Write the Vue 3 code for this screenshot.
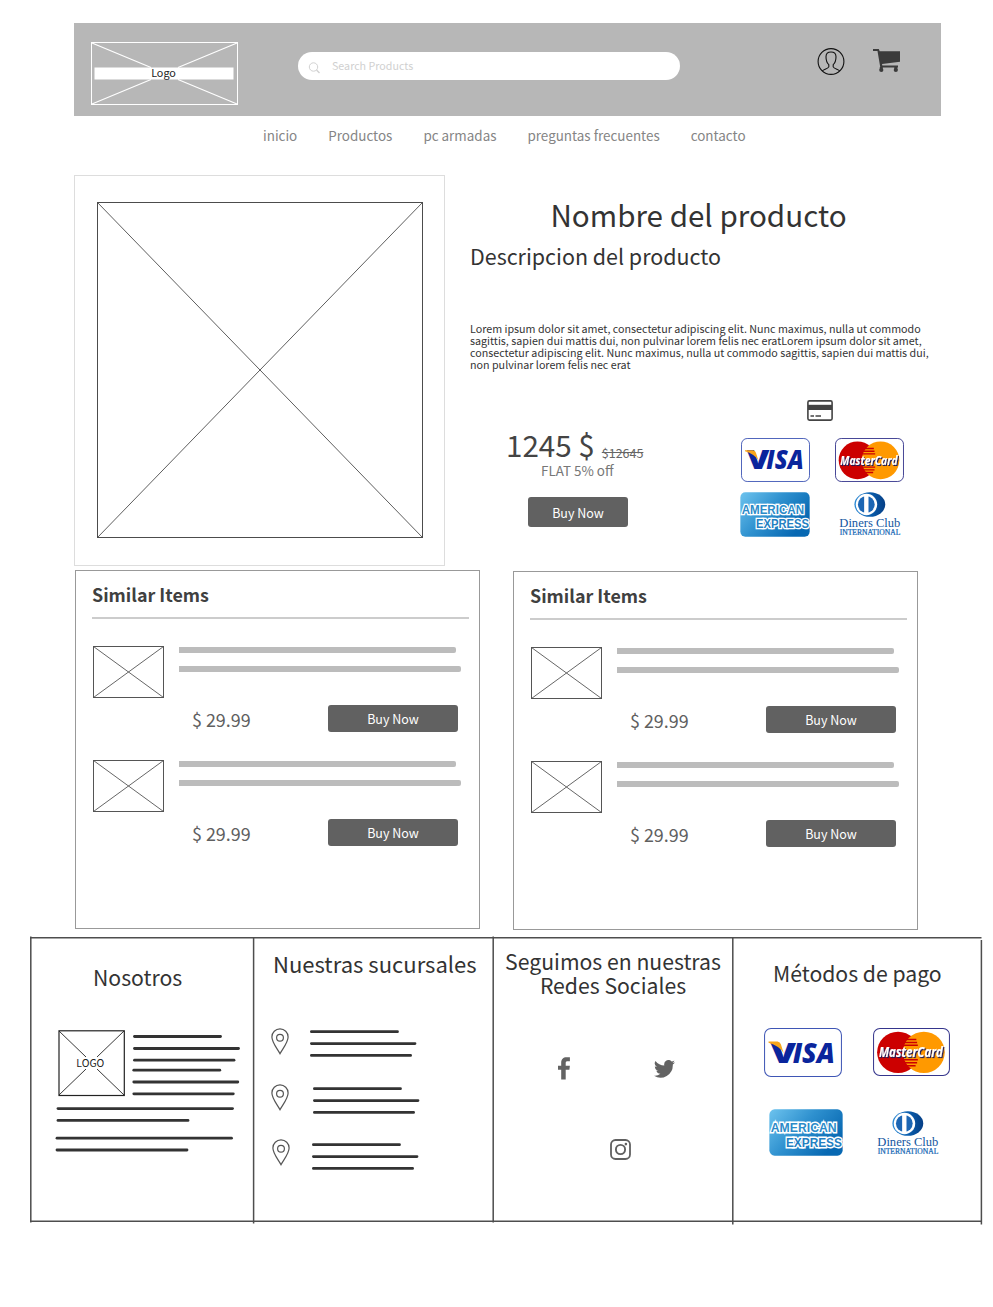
<script setup>
const nav = ['inicio', 'Productos', 'pc armadas', 'preguntas frecuentes', 'contacto']
const cards = [0, 1]
const items = [0, 1]
const sideLines = [
  [133.5, 1036.5, 88], [133.5, 1048.5, 106], [133.5, 1060.2, 101.5],
  [132.8, 1070.2, 88], [132.8, 1082, 106], [132.8, 1093.8, 101.5],
  [57, 1108.6, 176.5], [57, 1120.4, 132], [56, 1138.2, 176.5], [56, 1150, 132],
]
const branches = [
  { id: 'a', pin: 'pin-a', lines: 'lines-a' },
  { id: 'b', pin: 'pin-b', lines: 'lines-b' },
  { id: 'c', pin: 'pin-c', lines: 'lines-c' },
]
const brands = [
  {
    id: 'visa',
    box: '0 0 207 130',
    art: `<rect x="1.5" y="1.5" width="204" height="127" rx="17" fill="#fff" stroke="#3f56b5" stroke-width="2.7"/>
      <text y="92" font-family="Open Sans, sans-serif" font-weight="800" font-size="76" fill="#0a259c"><tspan x="17" textLength="68" lengthAdjust="spacingAndGlyphs">V</tspan><tspan x="76" font-style="italic" textLength="112" lengthAdjust="spacingAndGlyphs">ISA</tspan></text>
      <path d="M12 36H36Q43 37 45 44L52 66Q40 47 12 39Z" fill="#f7a51c"/>`,
  },
  {
    id: 'mc',
    box: '0 0 206 130',
    art: `<rect x="1.5" y="1.5" width="203" height="127" rx="17" fill="#fff" stroke="#35358c" stroke-width="2.7"/>
      <circle cx="67" cy="66" r="56" fill="#cc0000"/>
      <circle cx="136" cy="66" r="56" fill="#ff9900"/>
      <path d="M88 31H116M84 39H118M82 47H120M82 86H120M84 94H118M88 102H114" stroke="#cc0000" stroke-width="4"/>
      <g font-family="Open Sans, sans-serif" font-weight="700" font-style="italic" font-size="39">
        <text x="16" y="79" textLength="171" lengthAdjust="spacingAndGlyphs" fill="#fff" stroke="#fff" stroke-width="0.6" class="mc-word">MasterCard</text>
      </g>`,
  },
  {
    id: 'amex',
    box: '0 0 210 132',
    art: `<rect x="1" y="1" width="208" height="130" rx="15" fill="url(#amexFill)"/>
      <g font-family="Liberation Sans, sans-serif" font-weight="700" font-size="36" stroke="#fff" stroke-width="8" paint-order="stroke" stroke-linejoin="miter">
        <text x="5" y="64" textLength="187" lengthAdjust="spacingAndGlyphs" fill="#2b8bc9">AMERICAN</text>
        <text x="48" y="106" textLength="159" lengthAdjust="spacingAndGlyphs" fill="#2380c2">EXPRESS</text>
      </g>`,
  },
  {
    id: 'diners',
    box: '0 0 185 132',
    art: `<ellipse cx="92" cy="37.5" rx="46" ry="37" fill="url(#dinersFill)"/>
      <circle cx="82" cy="37.5" r="32" fill="#fff"/>
      <circle cx="81.500" cy="37.500" r="25" fill="#1c66b4"/>
      <rect x="75" y="10" width="13" height="55" fill="#fff"/>
      <g font-family="Liberation Serif, serif" fill="#14579f">
        <text x="1" y="104" font-size="38" textLength="182" lengthAdjust="spacingAndGlyphs">Diners Club</text>
        <text x="2" y="128" font-size="22" textLength="181" lengthAdjust="spacingAndGlyphs" fill="#1769b5" stroke="#1769b5" stroke-width="0.7">INTERNATIONAL</text>
      </g>`,
  },
]
</script>

<template>
  <div class="page">
    <svg class="defs" aria-hidden="true">
      <defs>
        <linearGradient id="amexFill" x1="0" y1="0" x2="1" y2="0.55">
          <stop offset="0" stop-color="#6dc3ee" />
          <stop offset="0.5" stop-color="#2f91cf" />
          <stop offset="1" stop-color="#0768b2" />
        </linearGradient>
        <linearGradient id="dinersFill" x1="0" y1="0" x2="1" y2="0">
          <stop offset="0" stop-color="#2b8ad6" />
          <stop offset="0.55" stop-color="#0a5cab" />
          <stop offset="1" stop-color="#063f86" />
        </linearGradient>
      </defs>
    </svg>

    <header class="header">
      <div class="logo">
        <svg class="logo-box" viewBox="0 0 147 63">
          <rect x="0.5" y="0.5" width="146" height="62" fill="none" stroke="#fff" />
          <path d="M1 1L60 25.500M146 1L87 25.500M1 62L60 37.500M146 62L87 37.500" stroke="#fff" stroke-width="1.200" />
          <rect x="3.500" y="25.500" width="139" height="12" fill="#fff" />
        </svg>
        <span class="logo-text">Logo</span>
      </div>
      <div class="search">
        <svg width="12" height="12" viewBox="0 0 12 12" fill="none" stroke="#d2d2d2">
          <circle cx="5.500" cy="5" r="4.200" />
          <path d="M8.500 8L11.500 11" stroke-width="1.400" />
        </svg>
        <span>Search Products</span>
      </div>
      <svg class="user" width="28" height="28" viewBox="0 0 28 28" fill="none" stroke="#111" stroke-width="1.100">
        <circle cx="14" cy="14.500" r="12.900" />
        <path d="M5.300 23.900C7 22.400 11 21.800 11.800 19.900V17.700C9.800 15.800 9 13.200 9 9.700C9 6.800 10.900 5 14 5S19 6.800 19 9.700C19 13.200 18.200 15.800 16.200 17.700V19.900C17 21.800 21 22.400 22.700 23.900" />
      </svg>
      <svg class="cart" width="28" height="24" viewBox="0 0 28 24" fill="#3b3b3b">
        <path d="M0 0H5.800L6.700 2.200H27V12.700L9 15L9.300 16.600H25V18.600H7.300L4.500 2H0Z" />
        <circle cx="8.300" cy="21" r="2.100" />
        <circle cx="22.800" cy="21" r="2.100" />
        <path d="M6.800 18H9.800V21H6.800ZM21.300 18H24.300V21H21.300Z" />
      </svg>
    </header>

    <nav class="nav">
      <a v-for="label in nav" :key="label">{{ label }}</a>
    </nav>

    <main class="product">
      <div class="gallery">
        <svg width="326" height="336" viewBox="0 0 326 336" fill="none" stroke="#4c4c4c">
          <rect x="0.5" y="0.5" width="325" height="335" />
          <path d="M0.5 0.5L325.500 335.500M325.500 0.5L0.5 335.500" stroke-width="0.9" />
        </svg>
      </div>
      <div class="info">
        <h1>Nombre del producto</h1>
        <h2>Descripcion del producto</h2>
        <p class="description">
          Lorem ipsum dolor sit amet, consectetur adipiscing elit. Nunc maximus, nulla ut commodo<br>
          sagittis, sapien dui mattis dui, non pulvinar lorem felis nec eratLorem ipsum dolor sit amet,<br>
          consectetur adipiscing elit. Nunc maximus, nulla ut commodo sagittis, sapien dui mattis dui,<br>
          non pulvinar lorem felis nec erat
        </p>
        <div class="purchase">
          <div class="offer">
            <div class="price-row"><span class="price">1245 $</span><s>$12645</s></div>
            <div class="discount">FLAT 5% off</div>
            <button class="buy buy-main">Buy Now</button>
          </div>
          <div class="payments">
            <svg class="card-icon" width="26" height="21" viewBox="0 0 26 21">
              <rect x="0.9" y="0.9" width="24.200" height="19.200" rx="1.500" fill="#fff" stroke="#444" stroke-width="1.600" />
              <path d="M1 4.800H25V10H1Z" fill="#444" />
              <path d="M3.500 16H7M8.500 16H14" stroke="#444" stroke-width="1.400" />
            </svg>
            <div class="brands">
              <svg v-for="b in brands" :key="b.id" :class="['brand', 'b-' + b.id]" :viewBox="b.box" preserveAspectRatio="none" v-html="b.art"></svg>
            </div>
          </div>
        </div>
      </div>
    </main>

    <section class="similar">
      <article v-for="card in cards" :key="card" class="similar-card">
        <h3>Similar Items</h3>
        <div v-for="item in items" :key="item" class="item">
          <svg class="thumb" width="71" height="52" viewBox="0 0 71 52" fill="none" stroke="#555">
            <rect x="0.5" y="0.5" width="70" height="51" />
            <path d="M0.5 0.5L70.500 51.500M70.500 0.5L0.5 51.500" stroke-width="0.9" />
          </svg>
          <div class="item-body">
            <div class="bar"></div>
            <div class="bar bar-long"></div>
            <div class="item-row">
              <span class="item-price">$ 29.99</span>
              <button class="buy">Buy Now</button>
            </div>
          </div>
        </div>
      </article>
    </section>

    <footer class="footer">
      <svg class="frame" width="955" height="290" viewBox="29 936 955 290" fill="none" stroke="#222" stroke-width="1.500" stroke-opacity="0.8">
        <path d="M30 937.700H981.500M30 1221.200H982M30.800 936.500V1222.500M253.600 938V1223.500M493.200 936.500V1222.500M732.800 938V1224.500M981.400 940V1224.500" />
      </svg>
      <section class="col about">
        <h4>Nosotros</h4>
        <svg class="about-art" width="190" height="126" viewBox="54 1028 190 126">
          <g fill="none" stroke="#222">
            <rect x="59" y="1030.800" width="65.300" height="64.700" stroke-width="1.200" />
            <path d="M59 1031L86 1057M124 1031L97 1057M59 1095L86 1069M124 1095L97 1069" stroke-width="0.9" />
          </g>
          <text x="76.300" y="1066.800" class="mini-logo" textLength="28" lengthAdjust="spacingAndGlyphs">LOGO</text>
          <path v-for="(l, i) in sideLines" :key="i" :d="`M${l[0] + 1} ${l[1]}h${l[2] - 2}`" stroke="#333" stroke-width="2.800" stroke-linecap="round" />
        </svg>
      </section>
      <section class="col places">
        <h4>Nuestras sucursales</h4>
        <div v-for="b in branches" :key="b.id" class="branch">
          <svg :class="b.pin" width="18" height="27" viewBox="0 0 18 27" fill="none" stroke="#555" stroke-width="1.200">
            <path d="M9 25.700C6.500 21 0.9 14.500 0.9 9A8.100 8.100 0 0 1 17.100 9C17.100 14.500 11.500 21 9 25.700Z" />
            <circle cx="9" cy="9.800" r="3.400" />
          </svg>
          <svg :class="b.lines" width="108" height="28" viewBox="0 0 108 28" stroke="#333" stroke-width="2.800" stroke-linecap="round">
            <path d="M1.400 1.700H87.500M1.400 13.600H105M1.400 25.400H100.600" />
          </svg>
        </div>
      </section>
      <section class="col social">
        <h4>Seguimos en nuestras<br>Redes Sociales</h4>
        <div class="social-row">
          <svg width="12" height="23" viewBox="0 0 12 23" fill="#636363">
            <path d="M3.200 22.500V12.700H0V8.700H3.200V6C3.200 2.200 5.200 0.300 8.600 0.300H11.900V4.200H9.700C8.200 4.200 7.700 4.800 7.700 6.100V8.700H11.900L11.400 12.700H7.700V22.500Z" />
          </svg>
          <svg width="21" height="18" viewBox="0 0 24 20" preserveAspectRatio="none" fill="#636363">
            <path d="M24 2.400a9.800 9.800 0 0 1-2.800.8A4.900 4.900 0 0 0 23.300.5a9.900 9.900 0 0 1-3.100 1.200 4.900 4.900 0 0 0-8.400 4.500A14 14 0 0 1 1.700 1a4.900 4.900 0 0 0 1.500 6.600A4.900 4.900 0 0 1 1 7a4.900 4.900 0 0 0 3.900 4.900 4.900 4.900 0 0 1-2.200.1 4.900 4.900 0 0 0 4.600 3.400A9.900 9.900 0 0 1 0 17.500 14 14 0 0 0 21.500 5.100 10 10 0 0 0 24 2.400Z" />
          </svg>
        </div>
        <svg class="instagram" width="21" height="21" viewBox="0 0 21 21" fill="none" stroke="#606060">
          <rect x="1" y="1" width="19" height="19" rx="4.500" stroke-width="1.800" />
          <circle cx="10.500" cy="10.500" r="4.600" stroke-width="1.900" />
          <circle cx="15.900" cy="5.100" r="1.300" fill="#606060" stroke="none" />
        </svg>
      </section>
      <section class="col methods">
        <h4>Métodos de pago</h4>
        <div class="brands brands-footer">
          <svg v-for="b in brands" :key="b.id" :class="['brand', 'b-' + b.id]" :viewBox="b.box" preserveAspectRatio="none" v-html="b.art"></svg>
        </div>
      </section>
    </footer>
  </div>
</template>

<style>
html, body { background: #fff; }
</style>

<style scoped>
* { box-sizing: border-box; }
.page {
  width: 993px;
  height: 1307px;
  padding-top: 23px;
  overflow: hidden;
  background: #fff;
  color: #333;
  font-family: "Noto Sans CJK SC", "Noto Sans", sans-serif;
}
svg { display: block; flex: none; }
.defs { position: absolute; width: 0; height: 0; }
h1, h2, h3, h4, p { margin: 0; font-weight: 400; white-space: nowrap; }

.header {
  display: flex;
  align-items: flex-start;
  width: 867px;
  height: 93px;
  margin-left: 74px;
  background: #b7b7b7;
}
.logo { position: relative; width: 147px; height: 63px; margin: 19px 0 0 17px; }
.logo-box { width: 147px; height: 63px; }
.logo-text {
  position: absolute;
  inset: 22px 0 auto;
  padding-right: 2px;
  text-align: center;
  font-size: 10.8px;
  line-height: 16px;
  color: #222;
}
.search {
  display: flex;
  align-items: center;
  gap: 12px;
  width: 382px;
  height: 28px;
  margin: 29px 0 0 60px;
  padding-left: 10px;
  border-radius: 14px;
  background: #fff;
  color: #d0d0d0;
  font-size: 10.7px;
  line-height: 16px;
}
.search svg { margin-top: 3px; }
.user { margin: 24px 0 0 137px; }
.cart { margin: 26px 0 0 28px; }

.nav {
  display: flex;
  gap: 31px;
  height: 59px;
  padding: 1px 0 0 263px;
  color: #858585;
  font-size: 13.43px;
  line-height: 36px;
}

.product { display: flex; height: 391px; margin-left: 74px; }
.gallery { width: 371px; height: 391px; padding: 26px 0 0 22px; border: 1px solid #ddd; }
.info { width: 460px; margin-left: 25px; padding-top: 22px; }
h1 { padding-right: 3px; font-size: 29.6px; line-height: 36px; text-align: center; }
h2 { margin-top: 8px; font-size: 21.45px; line-height: 30px; }
.description { margin-top: 52px; font-size: 10.73px; line-height: 12px; }
.purchase { display: flex; margin-top: 29px; }
.offer { width: 270px; padding-top: 26px; }
.price-row { display: flex; align-items: baseline; gap: 7px; height: 34px; padding-left: 36px; }
.price { font-size: 29.6px; line-height: 38px; color: #444; }
s { position: relative; top: 1px; font-size: 12.5px; color: #666; }
.discount { margin: 0 0 0 71px; font-size: 13.4px; line-height: 20px; color: #777; }
.buy {
  display: block;
  width: 130px;
  height: 27px;
  padding: 0;
  border: 0;
  border-radius: 3px;
  background: #616161;
  color: #fff;
  font-family: inherit;
  font-size: 12.5px;
  line-height: 27px;
  text-align: center;
}
.buy-main { width: 100px; height: 30px; margin: 17px 0 0 58px; line-height: 32px; }
.card-icon { margin-left: 66.5px; }
.brands {
  display: grid;
  grid-template-columns: 95px 69px;
  grid-template-rows: 54px 46px;
  margin-top: 16.5px;
}
.brand { overflow: visible; }
.brand :deep(.mc-word) { filter: drop-shadow(3px 3px 0 #1d1b59); }
.b-visa, .b-mc { width: 69px; height: 44px; }
.b-visa { margin-left: 1px; }
.b-amex { width: 70px; height: 45px; }
.b-diners { width: 62px; height: 44px; margin-left: 4px; }

.similar { display: flex; gap: 33px; height: 370px; padding: 4px 0 0 75px; }
.similar-card { width: 405px; height: 359px; padding: 9px 10px 0 16px; border: 1px solid #999; }
.similar-card + .similar-card { margin-top: 1px; }
h3 {
  height: 39px;
  margin-bottom: 27px;
  border-bottom: 2px solid #ccc;
  color: #404040;
  font-size: 17.9px;
  font-weight: 700;
  line-height: 29px;
}
.item { display: flex; height: 114px; padding-left: 1px; }
.item-body { width: 290px; margin-left: 15px; padding-top: 1px; }
.bar { width: 277px; height: 6px; margin-bottom: 13px; border-radius: 0 2px 2px 0; background: #bcbcbc; }
.bar-long { width: 282px; margin-bottom: 33px; }
.item-row { display: flex; justify-content: space-between; padding: 0 11px 0 13px; }
.item-price { color: #606060; font-size: 17.9px; line-height: 29px; }

.footer { position: relative; display: grid; grid-template-columns: 223px 240px 239px 249px; height: 290px; margin-left: 30px; }
.frame { position: absolute; left: -1px; top: 0; }
h4 { font-size: 21.2px; line-height: 24px; }
.about { padding: 29px 0 0 24px; }
.about h4 { padding-left: 39px; }
.about-art { margin-top: 39px; }
.mini-logo { font-size: 10.7px; fill: #222; }
.places { padding: 15px 0 0 18px; }
.places h4 { padding-left: 2px; margin-bottom: 53px; font-size: 22.05px; }
.branch { display: flex; height: 56px; }
.pin-c { margin-left: 1px; margin-top: -1px; }
.lines-a { margin: 2px 0 0 21px; }
.lines-b { margin: 3px 0 0 24px; }
.lines-c { margin: 3px 0 0 22px; }
.social { padding-top: 13px; }
.social h4 { padding-left: 1px; text-align: center; }
.social-row { display: flex; gap: 84px; align-items: center; margin: 60px 0 0 65px; }
.instagram { margin: 59px 0 0 117px; }
.methods { padding: 25px 0 0 32px; }
.methods h4 { padding-left: 9px; }
.brands-footer { grid-template-columns: 108.5px 77px; grid-template-rows: 81px 48px; margin-top: 42.5px; }
.brands-footer .b-visa { width: 78px; height: 49px; margin-left: 0; }
.brands-footer .b-mc { width: 77px; height: 48px; }
.brands-footer .b-amex { width: 74px; height: 47px; margin-left: 5px; }
.brands-footer .b-diners { width: 62px; height: 44px; margin: 2px 0 0 4.5px; }
</style>
